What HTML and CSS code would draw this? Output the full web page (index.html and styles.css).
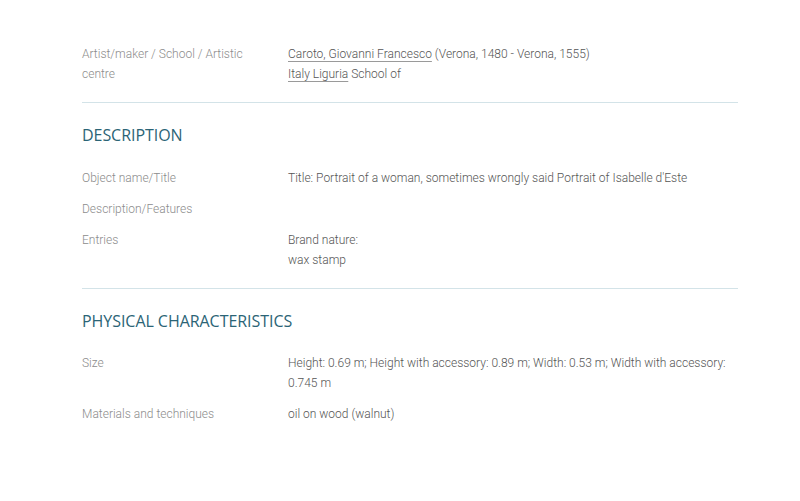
FILE: index.html
```html
<!DOCTYPE html>
<html lang="en">
<head>
<meta charset="utf-8">
<title>Record</title>
<link rel="stylesheet" href="styles.css">
</head>
<body>
<main class="record">
  <section class="section intro">
    <div class="row">
      <div class="label">Artist/maker / School / Artistic centre</div>
      <div class="value">
        <div><a class="link" href="#">Caroto, Giovanni Francesco</a> (Verona, 1480 - Verona, 1555)</div>
        <div><a class="link" href="#">Italy Liguria</a> School of</div>
      </div>
    </div>
  </section>
  <section class="section desc">
    <h2 class="heading">DESCRIPTION</h2>
    <div class="row">
      <div class="label">Object name/Title</div>
      <div class="value">Title: Portrait of a woman, sometimes wrongly said Portrait of Isabelle d'Este</div>
    </div>
    <div class="row">
      <div class="label">Description/Features</div>
      <div class="value"></div>
    </div>
    <div class="row">
      <div class="label">Entries</div>
      <div class="value">Brand nature:<br>wax stamp</div>
    </div>
  </section>
  <section class="section last">
    <h2 class="heading">PHYSICAL CHARACTERISTICS</h2>
    <div class="row">
      <div class="label">Size</div>
      <div class="value">Height: 0.69 m; Height with accessory: 0.89 m; Width: 0.53 m; Width with accessory: 0.745 m</div>
    </div>
    <div class="row">
      <div class="label">Materials and techniques</div>
      <div class="value">oil on wood (walnut)</div>
    </div>
  </section>
</main>
</body>
</html>
```
FILE: styles.css
```css
html, body {
  margin: 0;
  padding: 0;
  background: #ffffff;
}
body {
  font-family: Roboto, "Liberation Sans", sans-serif;
  font-weight: 300;
  font-size: 12px;
  line-height: 20px;
  color: #555555;
}
.record {
  width: 656px;
  margin-left: 82px;
  padding-top: 44px;
}
.section {
  border-bottom: 1px solid #d3e3e8;
  padding-bottom: 19px;
  margin-bottom: 22px;
}
.section.intro {
  padding-bottom: 18px;
}
.section.desc {
  padding-bottom: 18px;
}
.section.desc .heading {
  margin-bottom: 23px;
}
.section.last {
  border-bottom: none;
}
.heading {
  margin: 0 0 22px 0;
  font-family: "Open Sans", "Noto Sans", sans-serif;
  font-weight: 400;
  font-size: 16px;
  line-height: 20px;
  letter-spacing: -0.05px;
  color: #2b6476;
}
.row {
  display: flex;
  margin-top: 11px;
}
.section .row:first-of-type {
  margin-top: 0;
}
.label {
  width: 206px;
  flex: none;
  color: #8c8c8c;
  padding-right: 20px;
  box-sizing: border-box;
}
.value {
  flex: 1;
  min-height: 20px;
}
.link {
  color: #555555;
  text-decoration: underline;
  text-decoration-color: #9a9a9a;
  text-decoration-thickness: 1px;
  text-underline-offset: 3px;
}
```
